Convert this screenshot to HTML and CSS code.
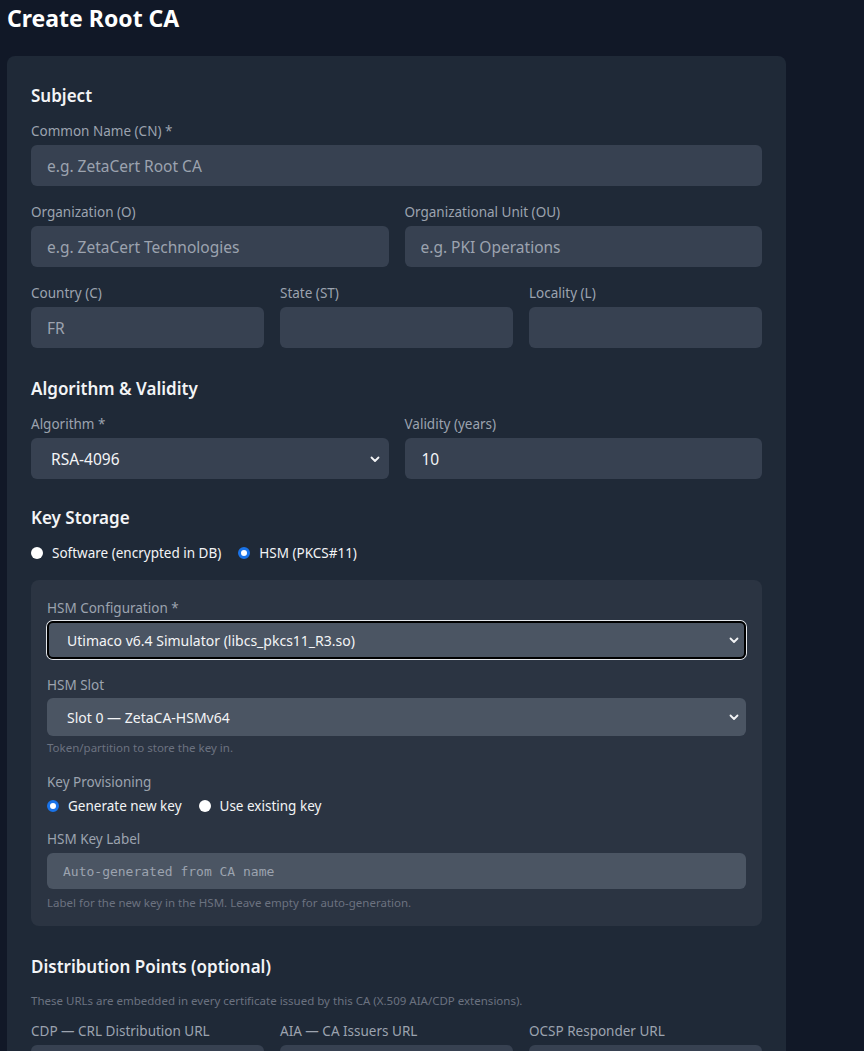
FILE: index.html
```html
<!DOCTYPE html>
<html lang="en">
<head>
    <meta charset="UTF-8">
    <meta name="viewport" content="width=device-width, initial-scale=1.0">
    <title>Create Root CA</title>
    <link rel="stylesheet" href="styles.css">
</head>
<body>

<div class="page">
    <h1>Create Root CA</h1>

    <form class="card">
        <section class="section">
            <h3>Subject</h3>
            <div class="field">
                <label>Common Name (CN) *</label>
                <input type="text" placeholder="e.g. ZetaCert Root CA">
            </div>
            <div class="grid two">
                <div class="field">
                    <label>Organization (O)</label>
                    <input type="text" placeholder="e.g. ZetaCert Technologies">
                </div>
                <div class="field">
                    <label>Organizational Unit (OU)</label>
                    <input type="text" placeholder="e.g. PKI Operations">
                </div>
            </div>
            <div class="grid three">
                <div class="field">
                    <label>Country (C)</label>
                    <input type="text" placeholder="FR">
                </div>
                <div class="field">
                    <label>State (ST)</label>
                    <input type="text">
                </div>
                <div class="field">
                    <label>Locality (L)</label>
                    <input type="text">
                </div>
            </div>
        </section>

        <section class="section">
            <h3>Algorithm &amp; Validity</h3>
            <div class="grid two">
                <div class="field">
                    <label>Algorithm *</label>
                    <div class="select-wrap">
                        <select>
                            <option>RSA-4096</option>
                            <option>RSA-2048</option>
                            <option>ECDSA P-384</option>
                        </select>
                        <svg class="chevron" viewBox="0 0 12 12"><path d="M2.5 4.5 6 8l3.5-3.5"/></svg>
                    </div>
                </div>
                <div class="field">
                    <label>Validity (years)</label>
                    <input type="text" class="value" value="10">
                </div>
            </div>
        </section>

        <section class="section storage">
            <h3>Key Storage</h3>
            <div class="radios">
                <label class="radio"><input type="radio" name="storage"> Software (encrypted in DB)</label>
                <label class="radio"><input type="radio" name="storage" checked> HSM (PKCS#11)</label>
            </div>

            <div class="panel">
                <div class="field">
                    <label>HSM Configuration *</label>
                    <div class="select-wrap">
                        <select class="small focused">
                            <option>Utimaco v6.4 Simulator (libcs_pkcs11_R3.so)</option>
                        </select>
                        <svg class="chevron" viewBox="0 0 12 12"><path d="M2.5 4.5 6 8l3.5-3.5"/></svg>
                    </div>
                </div>
                <div class="field">
                    <label>HSM Slot</label>
                    <div class="select-wrap">
                        <select class="small">
                            <option>Slot 0 — ZetaCA-HSMv64</option>
                        </select>
                        <svg class="chevron" viewBox="0 0 12 12"><path d="M2.5 4.5 6 8l3.5-3.5"/></svg>
                    </div>
                    <p class="hint">Token/partition to store the key in.</p>
                </div>
                <div class="field">
                    <label>Key Provisioning</label>
                    <div class="radios tight">
                        <label class="radio"><input type="radio" name="prov" checked> Generate new key</label>
                        <label class="radio"><input type="radio" name="prov"> Use existing key</label>
                    </div>
                </div>
                <div class="field after-radios">
                    <label>HSM Key Label</label>
                    <input type="text" class="mono" placeholder="Auto-generated from CA name">
                    <p class="hint">Label for the new key in the HSM. Leave empty for auto-generation.</p>
                </div>
            </div>
        </section>

        <section class="section">
            <h3>Distribution Points (optional)</h3>
            <p class="hint intro">These URLs are embedded in every certificate issued by this CA (X.509 AIA/CDP extensions).</p>
            <div class="grid three">
                <div class="field">
                    <label>CDP — CRL Distribution URL</label>
                    <input type="text">
                </div>
                <div class="field">
                    <label>AIA — CA Issuers URL</label>
                    <input type="text">
                </div>
                <div class="field">
                    <label>OCSP Responder URL</label>
                    <input type="text">
                </div>
            </div>
        </section>
    </form>
</div>

</body>
</html>
```

FILE: styles.css
```css
body {
    margin: 0;
    background-color: #111827;
    color: #f3f4f6;
    font-family: "Segoe UI", "Noto Sans", sans-serif;
}
.page {
    max-width: 779px;
    padding: 0 7px;
}
h1 {
    margin: 0;
    font-size: 23px;
    font-weight: 700;
    line-height: 36px;
    color: #fff;
}
.card {
    margin-top: 20px;
    padding: 26px 24px 24px;
    background-color: #1f2937;
    border-radius: 8px;
}
.section + .section {
    margin-top: 27px;
}
.section + .storage {
    margin-top: 25px;
}
h3 {
    margin: 0 0 11px;
    font-size: 17px;
    font-weight: 600;
    line-height: 28px;
}
.field {
    display: flex;
    flex-direction: column;
}
.field + .field,
.field + .grid,
.grid + .grid {
    margin-top: 16px;
}
.grid {
    display: grid;
    gap: 16px;
}
.grid .field + .field {
    margin-top: 0;
}
.two {
    grid-template-columns: 1fr 1fr;
}
.three {
    grid-template-columns: 1fr 1fr 1fr;
}
label {
    font-size: 13.5px;
    line-height: 20px;
    color: #9ca3af;
    margin-bottom: 4px;
}
input[type="text"], select {
    width: 100%;
    box-sizing: border-box;
    height: 41px;
    padding: 0 16px;
    border: none;
    border-radius: 6px;
    background-color: #374151;
    color: #f3f4f6;
    font-family: inherit;
    font-size: 15.5px;
    outline: none;
}
input::placeholder {
    color: #9ca3af;
}
input.value {
    padding-left: 17px;
}
.select-wrap {
    position: relative;
}
select {
    appearance: none;
    padding-left: 20px;
}
.chevron {
    position: absolute;
    right: 8px;
    top: 50%;
    width: 12px;
    height: 12px;
    margin-top: -6px;
    fill: none;
    stroke: #f3f4f6;
    stroke-width: 1.8;
    stroke-linecap: round;
    stroke-linejoin: round;
    pointer-events: none;
}
.radios {
    display: flex;
    gap: 17px;
    align-items: center;
    margin-bottom: 17px;
}
.radios.tight {
    margin: 1px 0 0;
}
.radio {
    display: flex;
    align-items: center;
    gap: 9px;
    margin: 0;
    font-size: 13.5px;
    color: #f3f4f6;
}
.radio input {
    appearance: none;
    width: 12px;
    height: 12px;
    margin: 0;
    border-radius: 50%;
    background-color: #fff;
}
.radio input:checked {
    border: 3px solid #1a73e8;
    box-sizing: border-box;
}
.panel {
    padding: 18px 16px 15px;
    background-color: #2b3442;
    border-radius: 8px;
}
.panel label {
    margin-bottom: 3px;
}
.panel .radio {
    margin-bottom: 0;
}
.panel select,
.panel input[type="text"] {
    height: 38px;
    background-color: #4b5563;
}
.panel .field.after-radios {
    margin-top: 13px;
}
.panel .after-radios label {
    margin-bottom: 4px;
}
.panel input.mono {
    height: 36px;
    font-family: "DejaVu Sans Mono", monospace;
    font-size: 13px;
}
select.small {
    font-size: 14px;
}
select.focused {
    box-shadow: 0 0 0 1px #e5e7eb, inset 0 0 0 2px #000;
}
.panel .chevron {
    right: 6px;
}
.hint {
    margin: 4px 0 0;
    font-size: 11.5px;
    line-height: 16px;
    color: #6b7280;
}
.panel input + .hint {
    margin-top: 6px;
}
.intro {
    margin: 12px 0 12px;
}
```
